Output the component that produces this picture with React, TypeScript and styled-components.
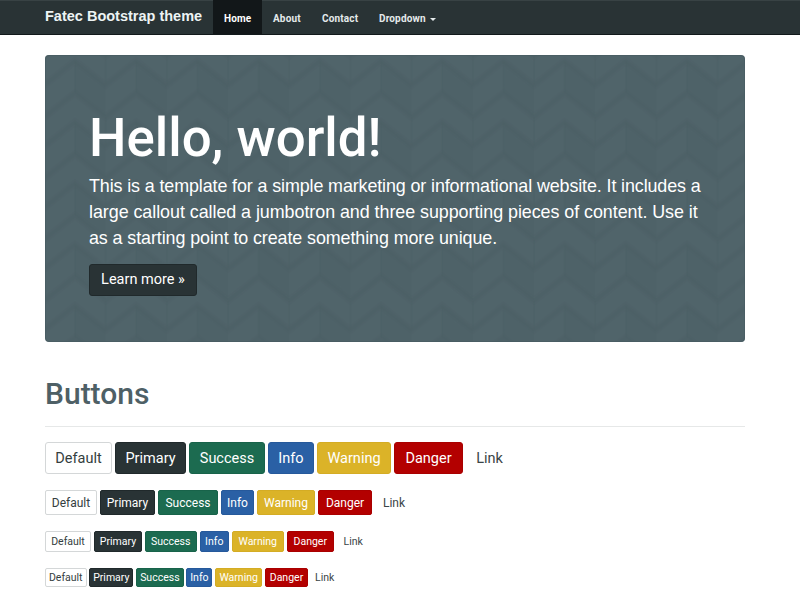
import React from "react";
import styled, { createGlobalStyle } from "styled-components";

const GlobalStyle = createGlobalStyle`
  * { box-sizing: border-box; }
  body { margin: 0; background: #fff; overflow: hidden; }
`;

const Page = styled.div`
  width: 800px;
  height: 600px;
  overflow: hidden;
  font-family: "Liberation Sans", Arial, sans-serif;
`;

const Navbar = styled.nav`
  display: flex;
  height: 35px;
  padding-left: 45px;
  background: #293335;
  border-top: 1px solid #384244;
  border-bottom: 1px solid #12191b;
`;

const Brand = styled.a`
  width: 168px;
  font-size: 14.5px;
  font-weight: 700;
  line-height: 30px;
  color: #edf3f4;
  white-space: nowrap;
`;

const NavItem = styled.a<{ $width: number; $active?: boolean }>`
  display: flex;
  align-items: center;
  gap: 4px;
  flex: none;
  width: ${(p) => p.$width}px;
  height: 34px;
  margin-top: -1px;
  padding: 2px 0 0 11px;
  font: 700 10px Roboto, sans-serif;
  letter-spacing: 0.15px;
  color: ${(p) => (p.$active ? "#fff" : "#e4eaeb")};
  background: ${(p) => (p.$active ? "#121719" : "transparent")};
`;

const Caret = styled.span`
  margin-top: 2px;
  border-top: 3px solid #e4eaeb;
  border-left: 3px solid transparent;
  border-right: 3px solid transparent;
`;

const Container = styled.main`
  width: 700px;
  margin: 20px 0 0 45px;
`;

const Jumbotron = styled.section`
  position: relative;
  height: 286.5px;
  padding: 52px 0 0 44px;
  border-radius: 4px;
  overflow: hidden;
  background: #50646a;
  color: #fff;
`;

const Backdrop = styled.svg`
  position: absolute;
  inset: 0;
`;

const Content = styled.div`
  position: relative;
`;

const Title = styled.h1`
  margin: 0;
  font: 500 52.8px/62px Roboto, sans-serif;
`;

const Lead = styled.p`
  margin: 4px 0 12px;
  font-size: 17.9px;
  line-height: 26.2px;
  white-space: nowrap;
`;

const LeadLine = styled.span<{ $tracking: number }>`
  display: block;
  letter-spacing: ${(p) => p.$tracking}px;
`;

const SectionTitle = styled.h2`
  margin: 33.5px 0 15px;
  height: 52px;
  border-bottom: 1px solid #e6e8e8;
  font: 500 30px/37px Roboto, sans-serif;
  color: #4e6066;
`;

type Size = "lg" | "md" | "sm" | "xs";

const sizes = {
  lg: { height: 32, font: 14.5, radius: 3, gap: 3 },
  md: { height: 25, font: 12, radius: 2, gap: 3 },
  sm: { height: 21, font: 10.5, radius: 2, gap: 3 },
  xs: { height: 19, font: 10.5, radius: 2, gap: 2.8 },
};

const tones: Record<string, [string, string, string]> = {
  Default: ["#fff", "#d4d7d8", "#343e40"],
  Primary: ["#293335", "#20292b", "#fff"],
  Success: ["#1c6b50", "#18634a", "#fff"],
  Info: ["#2a60a5", "#26599b", "#fff"],
  Warning: ["#dbb328", "#d4ac24", "#fff"],
  Danger: ["#b30000", "#a90000", "#fff"],
  Link: ["transparent", "transparent", "#3a4547"],
};

const ButtonRow = styled.div<{ $size: Size; $space: number }>`
  display: flex;
  gap: ${(p) => sizes[p.$size].gap}px;
  margin-bottom: ${(p) => p.$space}px;
`;

const Button = styled.button<{ $size: Size; $tone: string; $width: number }>`
  flex: none;
  width: ${(p) => p.$width}px;
  height: ${(p) => sizes[p.$size].height}px;
  padding: 0;
  border: 1px solid ${(p) => tones[p.$tone][1]};
  border-radius: ${(p) => sizes[p.$size].radius}px;
  background: ${(p) => tones[p.$tone][0]};
  color: ${(p) => tones[p.$tone][2]};
  font: 400 ${(p) => sizes[p.$size].font}px Roboto, sans-serif;
  white-space: nowrap;
`;

const labels = ["Default", "Primary", "Success", "Info", "Warning", "Danger", "Link"];

const rows: { size: Size; space: number; widths: number[] }[] = [
  { size: "lg", space: 16, widths: [67, 71, 76, 46, 74, 69, 47] },
  { size: "md", space: 16, widths: [52, 55, 60, 33, 58, 54, 38] },
  { size: "sm", space: 16, widths: [46, 48, 51.5, 29.5, 51.5, 47.5, 32.5] },
  { size: "xs", space: 0, widths: [41.5, 44, 47.5, 26, 47, 43, 28] },
];

function Chevrons() {
  return (
    <Backdrop width="700" height="287" aria-hidden="true">
      <defs>
        <pattern id="chevrons" x="-0.6" y="6" width="61.2" height="61.2" patternUnits="userSpaceOnUse">
          <path d="M30.6 0V32L61.2 56V24Z" fill="#4e6268" />
          <g fill="none" stroke="#4a5d63">
            <g strokeWidth="8" strokeOpacity=".28">
              <path d="M-5 28L0 24L30.6 0L61.2 24L66 28M-5 -33L0 -37L30.6 -61L61.2 -37L66 -33M-5 89L0 85L30.6 61.2L61.2 85L66 89" />
              <path d="M-5 60L0 56L30.6 32L61.2 56L66 60M-5 -1L0 -5L30.6 -29L61.2 -5L66 -1" />
            </g>
            <g strokeWidth="4" strokeOpacity=".32">
              <path d="M-5 28L0 24L30.6 0L61.2 24L66 28M-5 89L0 85L30.6 61.2L61.2 85L66 89" />
              <path d="M-5 60L0 56L30.6 32L61.2 56L66 60M-5 -1L0 -5L30.6 -29L61.2 -5L66 -1" />
            </g>
            <path d="M30.6 0V32M0 0V24M61.2 0V24M0 56V61.2M61.2 56V61.2" strokeWidth="1.6" strokeOpacity=".5" />
          </g>
        </pattern>
      </defs>
      <rect width="700" height="287" fill="url(#chevrons)" />
      <rect x=".5" y=".5" width="699" height="286" rx="3.5" fill="none" stroke="#465a60" strokeOpacity=".6" />
    </Backdrop>
  );
}

export default function App() {
  return (
    <Page>
      <GlobalStyle />
      <Navbar>
        <Brand>Fatec Bootstrap theme</Brand>
        <NavItem $width={49} $active>Home</NavItem>
        <NavItem $width={49}>About</NavItem>
        <NavItem $width={57}>Contact</NavItem>
        <NavItem $width={80}>Dropdown<Caret /></NavItem>
      </Navbar>
      <Container>
        <Jumbotron>
          <Chevrons />
          <Content>
            <Title>Hello, world!</Title>
            <Lead>
              <LeadLine $tracking={-0.11}>This is a template for a simple marketing or informational website. It includes a</LeadLine>
              <LeadLine $tracking={-0.05}>large callout called a jumbotron and three supporting pieces of content. Use it</LeadLine>
              <LeadLine $tracking={-0.09}>as a starting point to create something more unique.</LeadLine>
            </Lead>
            <Button $size="lg" $tone="Primary" $width={108}>Learn more »</Button>
          </Content>
        </Jumbotron>
        <SectionTitle>Buttons</SectionTitle>
        {rows.map((row) => (
          <ButtonRow key={row.size} $size={row.size} $space={row.space}>
            {labels.map((label, i) => (
              <Button key={label} $size={row.size} $tone={label} $width={row.widths[i]}>{label}</Button>
            ))}
          </ButtonRow>
        ))}
      </Container>
    </Page>
  );
}
